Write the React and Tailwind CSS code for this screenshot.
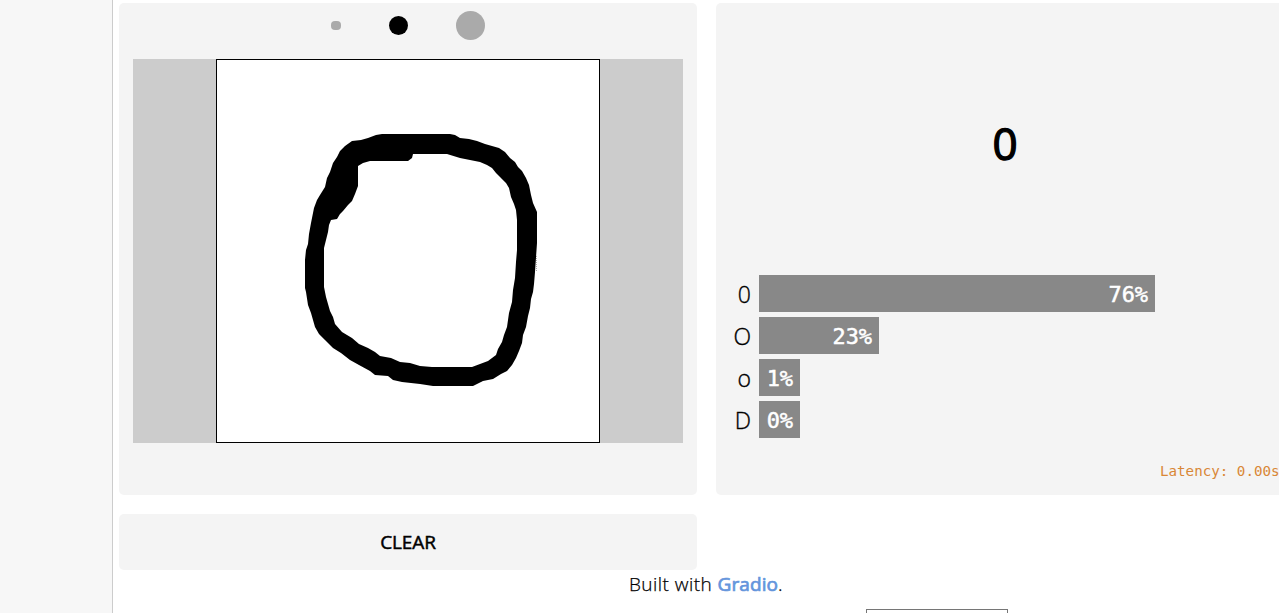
const results = [
  { label: "0", value: "76%", width: "w-[396px]" },
  { label: "O", value: "23%", width: "w-[120px]" },
  { label: "o", value: "1%", width: "w-[41px]" },
  { label: "D", value: "0%", width: "w-[41px]" },
];

function Brushes() {
  return (
    <div className="flex h-[45px] items-center justify-center pr-px">
      <span className="h-[9px] w-2.5 rounded-[4px] bg-[#aaa]" />
      <span className="ml-12 size-[19px] rounded-full bg-black" />
      <span className="ml-12 size-[29px] rounded-full bg-[#aaa]" />
    </div>
  );
}

function Sketchpad() {
  return (
    <div className="mx-3.5 mt-[11px] flex h-96 justify-center bg-[#ccc]">
      <div className="w-96 border border-black bg-white">
        <svg viewBox="217 60 382 382" className="block size-full">
          <path
            fillRule="evenodd"
            d="M305 260L306 250L308 244L309 234L311 223L314 208L317 200L320 195L325 187L327 178L330 172L333 163L337 157L340 151L345 146L352 141L361 140L368 138L376 135L382 134L450 134L455 135L460 138L469 139L477 141L485 144L492 146L499 148L505 152L510 158L515 162L518 167L522 171L526 178L529 185L531 195L533 203L537 212L537 243L535 272L534 284L533 292L531 299L530 308L528 316L526 327L523 335L522 343L519 351L516 358L512 365L507 371L501 374L493 379L483 381L473 386L433 386L420 384L402 382L393 380L388 376L375 375L370 371L359 365L350 360L341 353L333 348L325 340L319 334L315 327L311 313L308 305L306 292L305 288Z
            M324 260L324 248L326 240L328 232L329 225L331 220L337 219L340 214L343 211L348 205L352 201L355 194L358 186L358 166L363 163L370 161L408 161L412 158L413 154L447 154L460 158L470 160L480 162L487 165L492 168L496 173L500 177L506 183L509 188L511 197L514 204L516 210L517 220L517 250L516 262L515 278L513 290L512 302L509 313L507 327L504 335L502 342L498 349L496 355L488 361L480 364L472 367L432 367L420 366L410 363L400 362L391 358L380 356L375 352L368 348L359 344L352 338L342 332L335 324L333 317L330 311L328 304L326 297L324 287Z"
          />
          <path d="M536.5 256V272" stroke="#aaa" strokeDasharray="1 1" />
        </svg>
      </div>
    </div>
  );
}

export default function App() {
  return (
    <div className="flex h-[613px] w-[1279px] overflow-hidden bg-white font-['Open_Sans',sans-serif] text-black">
      <aside className="w-[113px] shrink-0 border-r border-[#ccc] bg-[#f7f7f7]" />
      <main className="w-[1181px] shrink-0 pt-[3px] pl-1.5">
        <div className="flex gap-[19px]">
          <div className="w-[578px]">
            <section className="h-[492px] rounded-[5px] bg-[#f4f4f4]">
              <Brushes />
              <Sketchpad />
            </section>
            <button className="mt-[19px] block h-14 w-full rounded-[5px] bg-[#f4f4f4] text-[19px] tracking-[-0.1px] [-webkit-text-stroke:0.5px]">
              CLEAR
            </button>
          </div>
          <section className="h-[492px] w-[578px] rounded-[5px] bg-[#f4f4f4]">
            <div className="flex h-[272px] items-center justify-center pt-2 text-[44px] [-webkit-text-stroke:1.3px]">
              0
            </div>
            <div className="flex flex-col gap-[5px]">
              {results.map((r) => (
                <div key={r.label} className="flex h-[37px] items-center">
                  <span className="w-[35px] pt-0.5 text-right text-[23px] leading-none font-light [-webkit-text-stroke:0.35px]">
                    {r.label}
                  </span>
                  <div
                    className={`ml-2 flex h-full items-center justify-end bg-[#888] pt-1 pr-[7px] font-['DejaVu_Sans_Mono',monospace] text-[21.9px] text-white [-webkit-text-stroke:0.5px] ${r.width}`}
                  >
                    {r.value}
                  </div>
                </div>
              ))}
            </div>
            <div className="mt-[23px] ml-[444px] font-['DejaVu_Sans_Mono',monospace] text-[14.2px] leading-5 whitespace-nowrap text-[#d98736]">
              Latency: 0.00s
            </div>
          </section>
        </div>
        <footer className="flex h-7 items-center pl-[510px] text-[19px] font-light tracking-[0.45px] whitespace-pre [-webkit-text-stroke:0.25px]">
          Built with <a className="font-normal tracking-[0.1px] text-[#6495dc] [-webkit-text-stroke:0.7px]">Gradio</a>.
        </footer>
        <div className="mt-[11px] ml-[747px] h-8 w-[142px] border border-[#767676]" />
      </main>
    </div>
  );
}
